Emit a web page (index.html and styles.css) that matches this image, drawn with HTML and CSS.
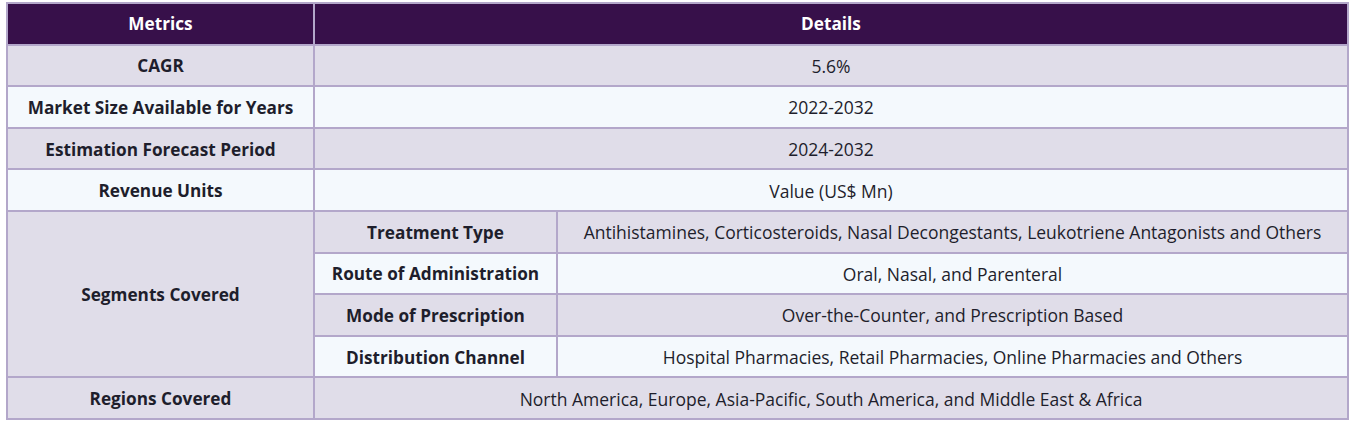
FILE: index.html
```html
<!DOCTYPE html>
<html lang="en">
<head>
<meta charset="utf-8">
<title>Report Scope</title>
<link rel="stylesheet" href="styles.css">
</head>
<body>
<table class="scope">
  <colgroup>
    <col class="c1">
    <col class="c2">
    <col class="c3">
  </colgroup>
  <thead>
    <tr>
      <th>Metrics</th>
      <th colspan="2">Details</th>
    </tr>
  </thead>
  <tbody>
    <tr><td class="label">CAGR</td><td colspan="2">5.6%</td></tr>
    <tr><td class="label">Market Size Available for Years</td><td colspan="2">2022-2032</td></tr>
    <tr><td class="label">Estimation Forecast Period</td><td colspan="2">2024-2032</td></tr>
    <tr><td class="label">Revenue Units</td><td colspan="2">Value (US$ Mn)</td></tr>
    <tr><td class="label seg" rowspan="4">Segments Covered</td><td class="label">Treatment Type</td><td>Antihistamines, Corticosteroids, Nasal Decongestants, Leukotriene Antagonists and Others</td></tr>
    <tr><td class="label">Route of Administration</td><td>Oral, Nasal, and Parenteral</td></tr>
    <tr><td class="label">Mode of Prescription</td><td>Over-the-Counter, and Prescription Based</td></tr>
    <tr><td class="label">Distribution Channel</td><td>Hospital Pharmacies, Retail Pharmacies, Online Pharmacies and Others</td></tr>
    <tr><td class="label">Regions Covered</td><td colspan="2">North America, Europe, Asia-Pacific, South America, and Middle East &amp; Africa</td></tr>
  </tbody>
</table>
</body>
</html>
```
FILE: styles.css
```css
html, body {
  margin: 0;
  background: #ffffff;
}
body {
  padding: 2px 5px 0 6px;
  font-family: "Open Sans", "Noto Sans", sans-serif;
  font-size: 17.5px;
  color: #1e1e2c;
}
.scope {
  width: 1343px;
  border-collapse: collapse;
  table-layout: fixed;
}
.c1 { width: 307px; }
.c2 { width: 243px; }
.scope th,
.scope td {
  border: 2px solid #b3a7ca;
  height: 41.6px;
  padding: 0 4px;
  text-align: center;
  vertical-align: middle;
  box-sizing: border-box;
  line-height: 20px;
}
.scope td {
  padding-top: 1px;
}
.scope td.label {
  padding-top: 2px;
}
.scope th {
  background: #37104a;
  color: #ffffff;
  font-weight: 700;
  font-size: 17.2px;
}
.scope tbody tr:nth-child(odd) td { background: #e0dde9; }
.scope tbody tr:nth-child(even) td { background: #f4f9fd; }
.scope tbody tr td.seg { background: #e0dde9; }
.label {
  font-weight: 700;
  font-size: 17.2px;
}
```
